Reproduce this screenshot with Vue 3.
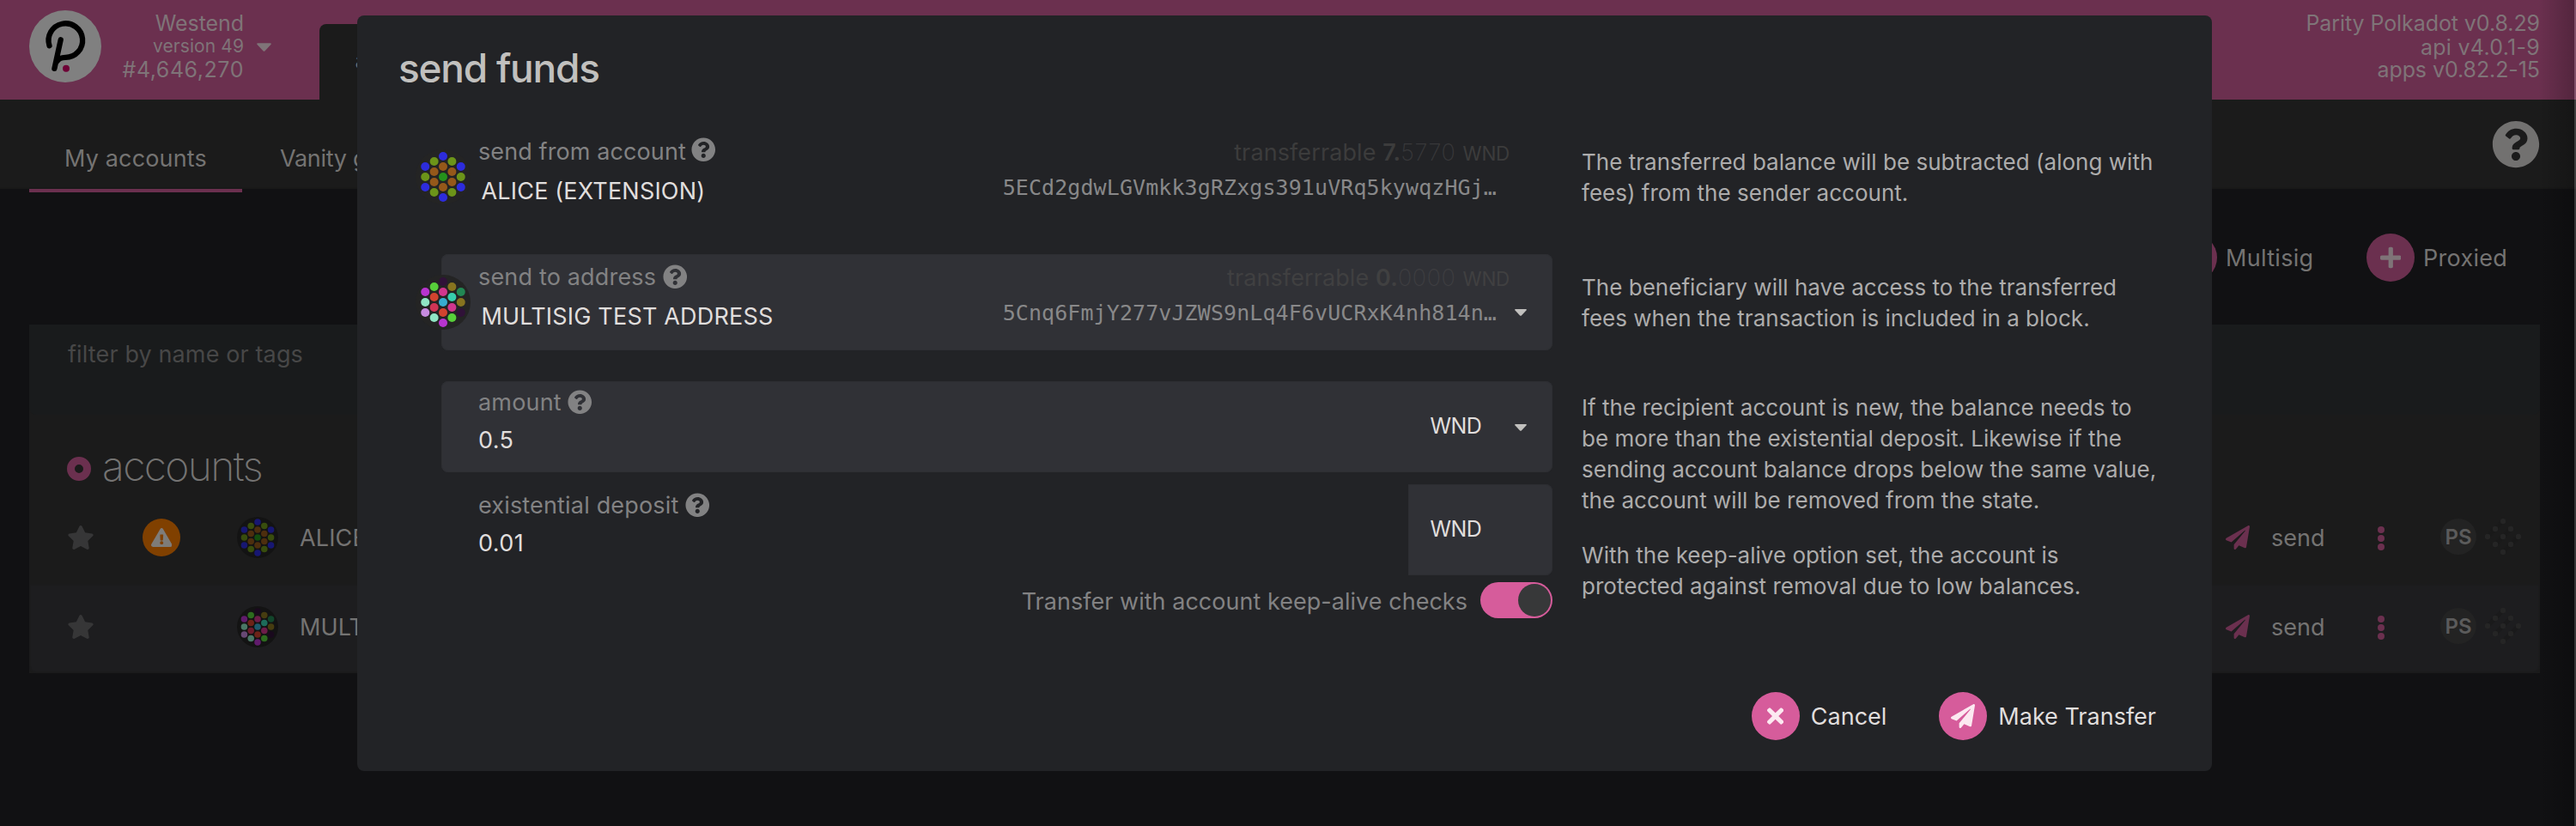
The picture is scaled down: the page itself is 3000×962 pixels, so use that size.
<script setup>
import { h } from 'vue'

const icons = {
  help: ['0 0 512 512', 'M504 256c0 136.997-111.043 248-248 248S8 392.997 8 256C8 119.083 119.043 8 256 8s248 111.083 248 248zM262.655 90c-54.497 0-89.255 22.957-116.549 63.758-3.536 5.286-2.353 12.415 2.715 16.258l34.699 26.31c5.205 3.947 12.621 3.008 16.665-2.122 17.864-22.658 30.113-35.797 57.303-35.797 20.429 0 45.698 13.148 45.698 32.958 0 14.976-12.363 22.667-32.534 33.976C247.128 238.528 216 254.941 216 296v4c0 6.627 5.373 12 12 12h56c6.627 0 12-5.373 12-12v-1.333c0-28.462 83.186-29.647 83.186-106.667 0-58.002-60.165-102-116.531-102zM256 338c-25.365 0-46 20.635-46 46 0 25.364 20.635 46 46 46s46-20.636 46-46c0-25.365-20.635-46-46-46z'],
  plane: ['0 0 512 512', 'M476 3.2L12.5 270.6c-18.1 10.4-15.8 35.6 2.2 43.2L121 358.4l287.3-253.2c5.5-4.9 13.3 2.6 8.6 8.3L176 407v80.5c0 23.6 28.5 32.9 42.5 15.8L282 426l124.6 52.2c14.2 6 30.4-2.9 33-18.2l72-432C515 7.8 493.3-6.8 476 3.2z'],
  star: ['0 0 576 512', 'M259.3 17.8L194 150.2 47.9 171.5c-26.2 3.8-36.7 36.1-17.7 54.6l105.7 103-25 145.5c-4.5 26.3 23.2 46 46.4 33.7L288 439.6l130.7 68.7c23.2 12.2 50.9-7.4 46.4-33.7l-25-145.5 105.7-103c19-18.5 8.5-50.8-17.7-54.6L382 150.2 316.7 17.8c-11.7-23.6-45.6-23.9-57.4 0z'],
  warn: ['0 0 576 512', 'M569.517 440.013C587.975 472.007 564.806 512 527.94 512H48.054c-36.937 0-59.999-40.055-41.577-71.987L246.423 23.985c18.467-32.009 64.72-31.951 83.154 0l239.94 416.028zM288 354c-25.405 0-46 20.595-46 46s20.595 46 46 46 46-20.595 46-46-20.595-46-46-46zm-43.673-165.346l7.418 136c.347 6.364 5.609 11.346 11.982 11.346h48.546c6.373 0 11.635-4.982 11.982-11.346l7.418-136c.375-6.874-5.098-12.654-11.982-12.654h-63.383c-6.884 0-12.356 5.78-11.981 12.654z'],
  plus: ['0 0 448 512', 'M416 208H272V64c0-17.67-14.33-32-32-32h-32c-17.67 0-32 14.33-32 32v144H32c-17.67 0-32 14.33-32 32v32c0 17.67 14.33 32 32 32h144v144c0 17.67 14.33 32 32 32h32c17.67 0 32-14.33 32-32V304h144c17.67 0 32-14.33 32-32v-32c0-17.67-14.33-32-32-32z'],
  times: ['0 0 352 512', 'M242.72 256l100.07-100.07c12.28-12.28 12.28-32.19 0-44.48l-22.24-22.24c-12.28-12.28-32.19-12.28-44.48 0L176 189.28 75.93 89.21c-12.28-12.28-32.19-12.28-44.48 0L9.21 111.45c-12.28 12.28-12.28 32.19 0 44.48L109.28 256 9.21 356.07c-12.28 12.28-12.28 32.19 0 44.48l22.24 22.24c12.28 12.28 32.2 12.28 44.48 0L176 322.72l100.07 100.07c12.28 12.28 32.2 12.28 44.48 0l22.24-22.24c12.28-12.28 12.28-32.19 0-44.48L242.72 256z'],
  caret: ['0 0 16 9', 'M1 0H15Q16.4 0.4 15.4 1.6L9 8.4Q8 9.4 7 8.4L0.6 1.6Q-0.4 0.4 1 0Z']
}
const Icon = (p) => h('svg', { viewBox: icons[p.name][0] }, [h('path', { d: icons[p.name][1], fill: 'currentColor' })])
Icon.props = ['name']

// Hexagonal lattice of 19 dots, listed row by row
const X = 10.39
const lattice = [
  [0, -24], [-X, -18], [X, -18], [-2 * X, -12], [0, -12], [2 * X, -12], [-X, -6], [X, -6],
  [-2 * X, 0], [0, 0], [2 * X, 0], [-X, 6], [X, 6], [-2 * X, 12], [0, 12], [2 * X, 12],
  [-X, 18], [X, 18], [0, 24]
]
const Identicon = (p) => h('svg', { viewBox: '-32 -32 64 64' }, [
  h('circle', { r: 32, fill: '#242424' }),
  ...lattice.map((c, i) => h('circle', { cx: c[0], cy: c[1], r: 5, fill: p.colors[i] }))
])
Identicon.props = ['colors']

const B = '#2d2cdc', O = '#6c9419', N = '#95581a', G = '#24921b'
const alice = [B, O, O, B, N, B, N, N, O, G, O, N, N, B, N, B, O, O, B]
const P = '#b834cf', K = '#301238', L = '#57d03a', Y = '#87741f', I = '#d1368d', R = '#d1432f', M = '#8fe5c4'
const multisig = [K, L, Y, P, I, '#228753', R, '#37cfae', M, '#37accf', Y, '#cf3455', I, '#c78be0', R, K, M, L, P]

const accounts = [
  { name: 'ALICE', warn: true, colors: alice },
  { name: 'MULTI', warn: false, colors: multisig }
]
const diamond = [[0, -18], [-9, -9], [9, -9], [-18, 0], [0, 0], [18, 0], [-9, 9], [9, 9], [0, 18]]
</script>

<template>
  <div class="page">
    <header class="top">
      <svg class="logo" viewBox="0 0 84 84">
        <circle cx="42" cy="42" r="42" fill="#808080" />
        <path d="M23.5 41.2A19.8 19.8 0 1 1 42.2 54.9Q35 55 32.4 59.5" fill="none" stroke="#000" stroke-width="6.3" stroke-linecap="round" />
        <path d="M36.7 34.3L29.4 67.8" fill="none" stroke="#000" stroke-width="6.3" stroke-linecap="round" />
        <circle cx="43" cy="67.7" r="4" fill="#6e0036" />
      </svg>
      <div class="network">
        <div class="chain">Westend</div>
        <div class="version">version 49</div>
        <div class="block">#4,646,270</div>
      </div>
      <Icon name="caret" class="top-caret" />
      <div class="top-tab">a</div>
      <div class="build">
        <div>Parity Polkadot v0.8.29</div>
        <div class="api">api v4.0.1-9</div>
        <div>apps v0.82.2-15</div>
      </div>
    </header>

    <nav class="tabs">
      <div class="tab active">My accounts</div>
      <div class="tab second">Vanity g</div>
      <Icon name="help" class="tabs-help" />
    </nav>

    <div class="actions">
      <div class="action"><span class="round dim"><Icon name="plus" class="i-plus" /></span>Multisig</div>
      <div class="action"><span class="round dim"><Icon name="plus" class="i-plus" /></span>Proxied</div>
    </div>

    <section class="table">
      <div class="filter">filter by name or tags</div>
      <div class="heading"><span class="ring"></span>accounts</div>
      <div v-for="a in accounts" :key="a.name" class="row">
        <Icon name="star" class="star" />
        <span><span v-if="a.warn" class="warn"><Icon name="warn" class="i-warn" /></span></span>
        <Identicon :colors="a.colors" class="small-id" />
        <span class="row-name">{{ a.name }}</span>
        <Icon name="plane" class="row-plane" />
        <span class="send">send</span>
        <span class="dots"><i></i><i></i><i></i></span>
        <span class="ps">PS</span>
        <svg class="diamond" viewBox="-21 -21 42 42">
          <path d="M-18 0L0 -18M-9 9L9 -9M0 18L18 0" class="links" />
          <circle v-for="(d, k) in diamond" :key="k" :cx="d[0]" :cy="d[1]" r="3.2" />
        </svg>
      </div>
    </section>

    <div class="edge"></div>

    <div class="modal">
      <h1>send funds</h1>
      <div class="body">
        <div class="form">
          <div class="box from">
            <Identicon :colors="alice" class="big-id" />
            <div class="left">
              <div class="label">send from account<Icon name="help" class="q up" /></div>
              <div class="name">ALICE (EXTENSION)</div>
            </div>
            <div class="right">
              <div class="balance">transferrable <b>7.</b><em>5770</em><small>WND</small></div>
              <div class="address">5ECd2gdwLGVmkk3gRZxgs391uVRq5kywqzHGj…</div>
            </div>
          </div>
          <div class="box to">
            <Identicon :colors="multisig" class="big-id" />
            <div class="left">
              <div class="label">send to address<Icon name="help" class="q" /></div>
              <div class="name">MULTISIG TEST ADDRESS</div>
            </div>
            <div class="right">
              <div class="balance">transferrable <b>0.</b><em>0000</em><small>WND</small></div>
              <div class="address">5Cnq6FmjY277vJZWS9nLq4F6vUCRxK4nh814n…</div>
            </div>
            <Icon name="caret" class="caret low" />
          </div>
          <div class="box amount">
            <div class="left">
              <div class="label">amount<Icon name="help" class="q" /></div>
              <div class="value">0.5</div>
            </div>
            <div class="unit">WND</div>
            <Icon name="caret" class="caret" />
          </div>
          <div class="box deposit">
            <div class="left">
              <div class="label">existential deposit<Icon name="help" class="q" /></div>
              <div class="value">0.01</div>
            </div>
            <div class="unit filled">WND</div>
          </div>
          <div class="keep">
            <span>Transfer with account keep-alive checks</span>
            <span class="toggle"><i></i></span>
          </div>
        </div>
        <div class="notes">
          <p>The transferred balance will be subtracted (along with<br>fees) from the sender account.</p>
          <p>The beneficiary will have access to the transferred<br>fees when the transaction is included in a block.</p>
          <p>If the recipient account is new, the balance needs to<br>be more than the existential deposit. Likewise if the<br>sending account balance drops below the same value,<br>the account will be removed from the state.</p>
          <p>With the keep-alive option set, the account is<br>protected against removal due to low balances.</p>
        </div>
      </div>
      <div class="footer">
        <div class="btn"><span class="round"><Icon name="times" class="i-times" /></span>Cancel</div>
        <div class="btn"><span class="round"><Icon name="plane" class="i-plane" /></span>Make Transfer</div>
      </div>
    </div>
  </div>
</template>

<style scoped>
.page { position: relative; width: 3000px; height: 962px; overflow: hidden; background: #111113; font-family: Inter, "Liberation Sans", sans-serif; font-size: 27px; font-weight: 430; color: #747372; }
svg { display: block; flex: none; }
i, em, small { font-style: normal; }

.top { display: flex; height: 116px; background: #6b304f; color: #7f7478; font-size: 25px; line-height: 28px; letter-spacing: -0.08px; }
.logo { width: 84px; height: 84px; margin: 12px 0 0 34px; }
.network { width: 166px; padding-top: 13px; text-align: right; }
.version { font-size: 21px; line-height: 26px; letter-spacing: 0.08px; }
.block { letter-spacing: 0.55px; }
.top-caret { width: 17px; height: 10px; margin: 50px 0 0 14.5px; }
.top-tab { width: 60px; height: 88px; margin: 28px 0 0 56.5px; padding-left: 41.5px; box-sizing: border-box; border-radius: 8px 0 0 0; background: #1b1b1b; color: #747372; font-size: 27px; line-height: 86px; }
.build { margin-left: auto; padding: 13px 42px 0 0; text-align: right; }
.build .api { margin-bottom: -2px; letter-spacing: 0.28px; }

.tabs { display: flex; height: 104px; background: #1b1b1b; box-shadow: inset 0 -2px #191919; letter-spacing: 0; }
.tab { height: 59px; padding: 45px 0 0 44px; line-height: 48px; white-space: nowrap; }
.tab.second { letter-spacing: -0.3px; }
.tab.active { width: 248px; padding: 45px 0 0; margin-left: 34px; border-bottom: 4px solid #6b304f; text-align: center; letter-spacing: 0.15px; }
.tabs-help { width: 56px; height: 56px; margin: 24px 42px 0 auto; color: #727170; }

.actions { display: grid; grid-template-columns: 230px 244px; justify-content: end; align-items: center; height: 158px; padding-top: 2px; box-sizing: border-box; letter-spacing: 0.3px; }
.action { display: flex; align-items: center; gap: 10px; }
.round { display: flex; align-items: center; justify-content: center; width: 56px; height: 56px; border-radius: 50%; background: #d65c9b; color: #fce9f1; }
.round.dim { background: #6b304f; color: #7f7478; }
.i-plus { width: 24.5px; height: 28px; }
.i-times { width: 19.25px; height: 28px; }
.i-plane { width: 28px; height: 28px; }

.table { width: 2924px; height: 406px; margin-left: 34px; background: #1b1b1b; }
.filter { height: 105px; box-sizing: border-box; padding: 18px 0 0 45px; background: #191b1c; color: #474747; line-height: 34px; letter-spacing: 0.12px; border-radius: 0 0 8px 8px; }
.heading { display: flex; align-items: center; height: 93px; box-sizing: border-box; padding: 26px 0 0 44px; font-size: 48px; font-weight: 200; line-height: 60px; letter-spacing: -1.65px; }
.ring { width: 10px; height: 10px; margin: 7px 13px 0 0; border: 9px solid #6b304f; border-radius: 50%; }
.row { display: grid; grid-template-columns: 88px 110px 73px 1fr 53px 124px 73px 52px 42px; align-items: center; height: 104px; box-sizing: border-box; padding: 0 22px 4px 44px; letter-spacing: 0.15px; }
.row + .row { background: #1d1d1f; box-shadow: inset 0 0 0 2px #1b1b1c; border-radius: 0 0 8px 8px; }
.star { width: 32px; height: 28px; color: #363637; }
.warn { display: flex; align-items: center; justify-content: center; width: 44px; height: 44px; border-radius: 50%; background: #804000; color: #7e7c79; }
.i-warn { width: 24.5px; height: 22px; margin-bottom: 1px; }
.small-id { width: 48px; height: 48px; filter: brightness(0.52); }
.row-name { white-space: nowrap; }
.row-plane { width: 28px; height: 28px; color: #6b304f; }
.send { letter-spacing: 0; }
.dots { display: flex; flex-direction: column; gap: 1.8px; margin-top: 2px; }
.dots i { width: 8px; height: 8px; border-radius: 50%; background: #6b304f; }
.ps { width: 42px; height: 42px; margin-top: -2px; border-radius: 50%; background: #232323; color: #5b5b5b; font-size: 24px; font-weight: 600; line-height: 43px; text-align: center; letter-spacing: 0; }
.diamond { width: 42px; height: 42px; margin-top: -2px; fill: #252525; }
.links { stroke: #191919; stroke-width: 5; fill: none; opacity: 0.6; }

.edge { position: absolute; top: 0; right: 0; width: 44px; height: 962px; box-sizing: border-box; border-right: 2px solid rgba(255, 255, 255, 0.16); background: linear-gradient(to right, rgba(0, 0, 0, 0), rgba(0, 0, 0, 0.22)) padding-box; }

.modal { position: absolute; left: 416px; top: 18px; width: 2160px; height: 880px; box-sizing: border-box; display: flex; flex-direction: column; border-radius: 8px; background: #222326; color: #e0dedd; }
h1 { margin: 31px 0 0 48px; height: 101px; color: #c1c0be; font-size: 46px; font-weight: 460; line-height: 60px; letter-spacing: -1.25px; }
.body { display: flex; }
.form { width: 1294px; margin-left: 98px; }
.box { position: relative; display: flex; justify-content: space-between; height: 112px; border-radius: 8px; line-height: 34px; }
.to, .amount { background: #303136; box-shadow: inset 0 0 0 1px #2e2f33; }
.to { margin-top: 34px; }
.amount, .deposit { height: 106px; }
.amount { margin-top: 36px; }
.deposit { margin-top: 14px; }
.big-id { position: absolute; left: -30px; top: 24px; width: 64px; height: 64px; }
.left { padding: 10px 0 0 43px; }
.amount .left, .deposit .left { padding-top: 8px; }
.label { display: flex; align-items: center; height: 34px; color: #828283; letter-spacing: 0.17px; }
.from .label { letter-spacing: 0.1px; }
.q { width: 28.5px; height: 28.5px; margin: -2px 0 0 7.5px; }
.q.up { margin: -5px 0 0 6.5px; }
.name { margin: 12px 0 0 3.5px; letter-spacing: 0.19px; }
.value { margin-top: 10px; letter-spacing: 0.4px; }
.right { padding: 11px 0 0; text-align: right; }
.balance { height: 34px; padding-right: 50px; color: #3c3c3c; letter-spacing: 0.1px; }
.balance b { font-weight: 600; }
.balance em { font-weight: 200; letter-spacing: 0.6px; color: #38383a; }
.to .balance em { color: #3e3e41; }
.to .balance { color: #404041; }
.balance small { margin-left: 8px; font-size: 22.5px; letter-spacing: -0.3px; }
.address { margin-top: 7px; padding-right: 65px; color: #888889; font-family: "DejaVu Sans Mono", monospace; font-size: 25px; letter-spacing: 0.09px; }
.caret { position: absolute; left: 1250px; top: 50px; width: 14px; height: 8px; color: #c1c0be; }
.caret.low { top: 64px; }
.unit { width: 168px; box-sizing: border-box; padding-left: 25.5px; font-size: 25px; line-height: 104px; letter-spacing: -0.6px; }
.unit.filled { background: #303136; border-radius: 0 8px 8px 0; box-shadow: inset 0 0 0 1px #2d2e32; }
.keep { display: flex; justify-content: flex-end; gap: 15px; height: 42px; margin-top: 8px; color: #828283; line-height: 45px; letter-spacing: 0.03px; }
.toggle { display: flex; justify-content: flex-end; width: 84px; height: 42px; padding: 2px; box-sizing: border-box; border-radius: 21px; background: #d65c9b; }
.toggle i { width: 38px; height: 38px; border-radius: 50%; background: #373839; }

.notes { padding: 21px 0 0 34px; color: #adacac; font-size: 26px; line-height: 36px; letter-spacing: 0.02px; white-space: nowrap; }
p { margin: 0 0 74px; }
p:nth-child(2) { margin-bottom: 68px; }
p:nth-child(3) { margin-bottom: 28px; }
p:last-child { margin-bottom: 0; }

.footer { display: flex; justify-content: flex-end; gap: 61px; margin-top: auto; padding: 0 65px 36px 0; }
.btn { display: flex; align-items: center; gap: 13px; letter-spacing: 0; }
</style>

<style>
html, body { background: #111113; }
</style>
